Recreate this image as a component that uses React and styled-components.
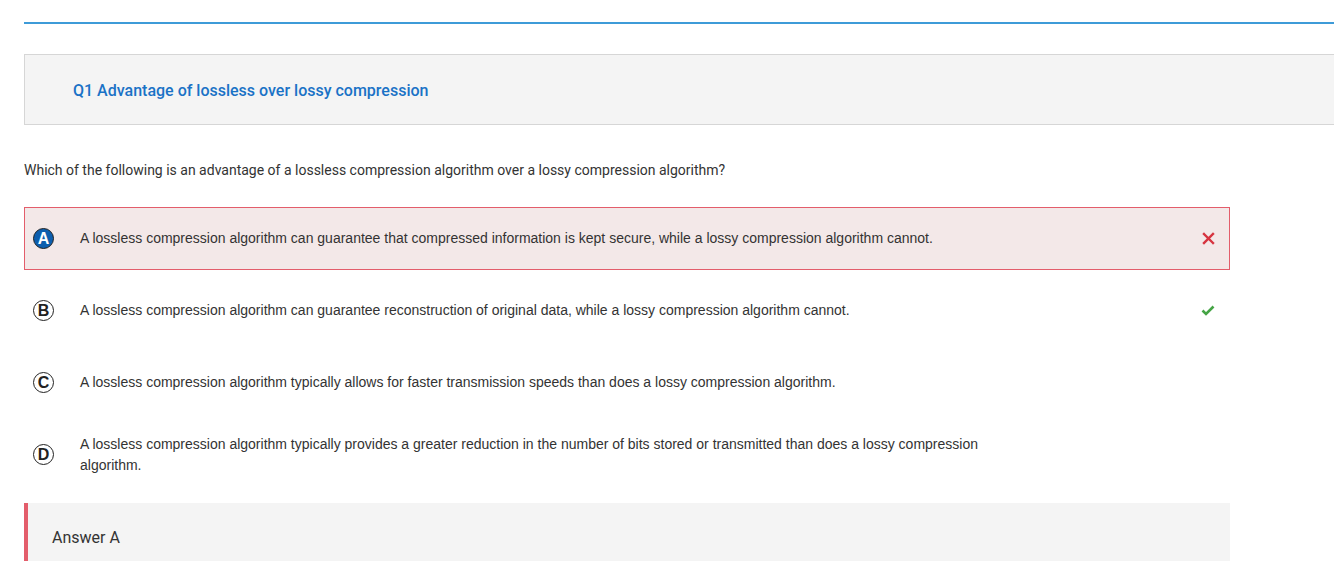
import React from 'react';
import styled, { createGlobalStyle } from 'styled-components';

const GlobalStyle = createGlobalStyle`
  html, body {
    margin: 0;
    padding: 0;
    background: #fff;
    overflow: hidden;
  }
  body {
    font-family: Roboto, "Liberation Sans", Arial, sans-serif;
    color: #333;
  }
`;

const options = [
  {
    letter: 'A',
    text: 'A lossless compression algorithm can guarantee that compressed information is kept secure, while a lossy compression algorithm cannot.',
    chosen: true,
    mark: 'wrong',
  },
  {
    letter: 'B',
    text: 'A lossless compression algorithm can guarantee reconstruction of original data, while a lossy compression algorithm cannot.',
    mark: 'right',
  },
  {
    letter: 'C',
    text: 'A lossless compression algorithm typically allows for faster transmission speeds than does a lossy compression algorithm.',
  },
  {
    letter: 'D',
    text: 'A lossless compression algorithm typically provides a greater reduction in the number of bits stored or transmitted than does a lossy compression algorithm.',
  },
];

const Cross = () => (
  <svg width="13" height="13" viewBox="0 0 13 13">
    <path d="M2 2 L11 11 M11 2 L2 11" stroke="#d6333f" strokeWidth="2.4" strokeLinecap="square" />
  </svg>
);

const Tick = () => (
  <svg width="14" height="11" viewBox="0 0 14 11">
    <path d="M1.5 5.5 L5 9 L12.5 1.5" fill="none" stroke="#45a445" strokeWidth="2.6" />
  </svg>
);

const App = () => (
  <>
    <GlobalStyle />
    <Page>
      <TopRule />
      <QuestionHeader>
        <Title>Q1 Advantage of lossless over lossy compression</Title>
      </QuestionHeader>
      <Prompt>
        Which of the following is an advantage of a lossless compression algorithm over a lossy compression algorithm?
      </Prompt>
      <OptionList>
        {options.map((o) => (
          <Option key={o.letter} $chosen={o.chosen}>
            <Badge $chosen={o.chosen}>{o.letter}</Badge>
            <OptionText>{o.text}</OptionText>
            <Mark>
              {o.mark === 'wrong' && <Cross />}
              {o.mark === 'right' && <Tick />}
            </Mark>
          </Option>
        ))}
      </OptionList>
      <AnswerBox>Answer A</AnswerBox>
    </Page>
  </>
);

export default App;

const Page = styled.div`
  padding: 22px 0 0 24px;
  width: 1360px;
`;

const TopRule = styled.div`
  height: 2px;
  background: #3e9bd8;
`;

const QuestionHeader = styled.div`
  margin-top: 30px;
  height: 71px;
  box-sizing: border-box;
  border: 1px solid #d6d6d6;
  background: #f4f4f4;
  display: flex;
  align-items: center;
  padding: 2px 0 0 48px;
`;

const Title = styled.h2`
  margin: 0;
  font-size: 16px;
  font-weight: 500;
  color: #1a72c6;
`;

const Prompt = styled.p`
  margin: 36px 0 0;
  font-size: 14px;
  line-height: 18px;
  color: #333;
`;

const OptionList = styled.div`
  margin-top: 28px;
  width: 1206px;
  display: flex;
  flex-direction: column;
  gap: 9px;
`;

const Option = styled.div`
  box-sizing: border-box;
  min-height: 63px;
  display: flex;
  align-items: center;
  padding: 0 14px 0 8px;
  border: 1px solid ${(p) => (p.$chosen ? '#e35d6b' : 'transparent')};
  background: ${(p) => (p.$chosen ? '#f3e8e8' : 'transparent')};
`;

const Badge = styled.span`
  flex: none;
  width: 21px;
  height: 21px;
  box-sizing: border-box;
  border-radius: 50%;
  border: 1.5px solid #222;
  background: ${(p) => (p.$chosen ? '#0d5eae' : '#fff')};
  color: ${(p) => (p.$chosen ? '#fff' : '#222')};
  font-family: "Liberation Sans", Arial, sans-serif;
  font-weight: 700;
  font-size: 16px;
  line-height: 1;
  display: flex;
  align-items: center;
  justify-content: center;
`;

const OptionText = styled.div`
  margin-left: 26px;
  width: 920px;
  font-family: "Liberation Sans", Arial, sans-serif;
  font-size: 14px;
  line-height: 21px;
  color: #333;
`;

const Mark = styled.div`
  margin-left: auto;
  width: 14px;
  display: flex;
  justify-content: center;
`;

const AnswerBox = styled.div`
  margin-top: 17px;
  width: 1206px;
  height: 70px;
  box-sizing: border-box;
  border-left: 4px solid #e35d6b;
  background: #f4f4f4;
  padding: 25px 0 0 24px;
  font-size: 16px;
  color: #333;
`;
